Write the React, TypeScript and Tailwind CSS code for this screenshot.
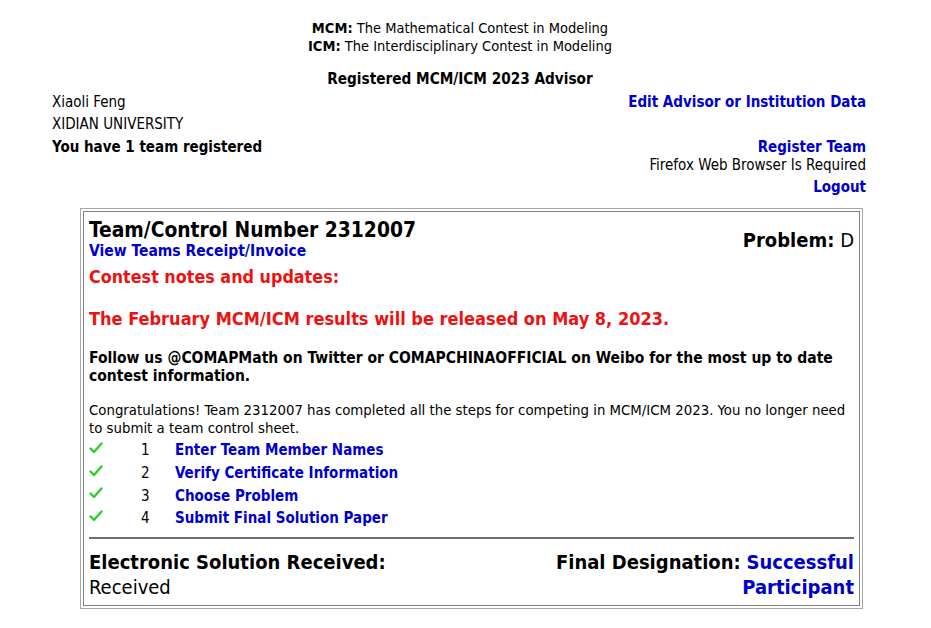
import React from "react";

const steps = [
  "Enter Team Member Names",
  "Verify Certificate Information",
  "Choose Problem",
  "Submit Final Solution Paper",
];

function Check() {
  return (
    <svg width="14" height="12" viewBox="0 0 14 12" className="mt-[-5px]">
      <path d="M1.5 6.5 L5 10 L12.5 1.5" fill="none" stroke="#2bd02b" strokeWidth="2.4" strokeLinecap="round" strokeLinejoin="round" />
    </svg>
  );
}

export default function App() {
  return (
    <div className="min-h-screen bg-white font-['DejaVu_Sans_Condensed','DejaVu_Sans',sans-serif] text-[15px] leading-[18px] text-black">
      <div className="pt-[19px] pr-[11px] text-center text-[14.5px]">
        <div><b>MCM:</b> The Mathematical Contest in Modeling</div>
        <div><b>ICM:</b> The Interdisciplinary Contest in Modeling</div>
        <div className="mt-[15px] text-[15.2px] font-bold">Registered MCM/ICM 2023 Advisor</div>
      </div>

      <div className="flex justify-between pl-[52px] pr-[65px]">
        <div className="pt-[5px]">
          <div className="h-[22px]">Xiaoli Feng</div>
          <div className="h-[23px]">XIDIAN UNIVERSITY</div>
          <div className="font-bold">You have 1 team registered</div>
        </div>
        <div className="flex flex-col items-end pt-[5px]">
          <div className="h-[45px] font-bold text-[#0000cc]">Edit Advisor or Institution Data</div>
          <div className="font-bold text-[#0000cc]">Register Team</div>
          <div className="h-[22px]">Firefox Web Browser Is Required</div>
          <div className="font-bold text-[#0000cc]">Logout</div>
        </div>
      </div>

      <div className="ml-[80px] mt-[12px] w-[783px] border border-[#a8a8a8] p-[2px]">
        <div className="border border-[#808080] px-[5px] pt-[6px] pb-[5px]">
          <div className="flex justify-between">
            <div>
              <div className="text-[20.8px] leading-[24px] font-bold">Team/Control Number 2312007</div>
              <div className="text-[15.5px] font-bold text-[#0000cc]">View Teams Receipt/Invoice</div>
            </div>
            <div className="pt-[10px] text-[20px] leading-[24px]"><b>Problem:</b> D</div>
          </div>
          <div className="mt-[6px] text-[17.8px] leading-[22px] font-bold text-[#ee1111]">Contest notes and updates:</div>
          <div className="mt-[20px] text-[18px] leading-[22px] font-bold text-[#ee1111]">The February MCM/ICM results will be released on May 8, 2023.</div>
          <div className="mt-[19px] text-[15.5px] font-bold">Follow us @COMAPMath on Twitter or COMAPCHINAOFFICIAL on Weibo for the most up to date contest information.</div>
          <div className="mt-[16px] text-[14.8px]">Congratulations! Team 2312007 has completed all the steps for competing in MCM/ICM 2023. You no longer need to submit a team control sheet.</div>
          <div className="mt-[2px]">
            {steps.map((s, i) => (
              <div key={s} className="flex h-[22.7px] items-center">
                <div className="w-[52px]"><Check /></div>
                <div className="w-[34px]">{i + 1}</div>
                <div className="font-bold text-[#0000cc]">{s}</div>
              </div>
            ))}
          </div>
          <div className="mt-[7px] border-t-2 border-[#707070]" />
          <div className="mt-[11px] flex justify-between text-[20px] leading-[25px]">
            <div>
              <div className="font-bold">Electronic Solution Received:</div>
              <div>Received</div>
            </div>
            <div className="w-[330px] text-right">
              <b>Final Designation:</b> <span className="font-bold text-[#0000cc]">Successful Participant</span>
            </div>
          </div>
        </div>
      </div>
    </div>
  );
}
